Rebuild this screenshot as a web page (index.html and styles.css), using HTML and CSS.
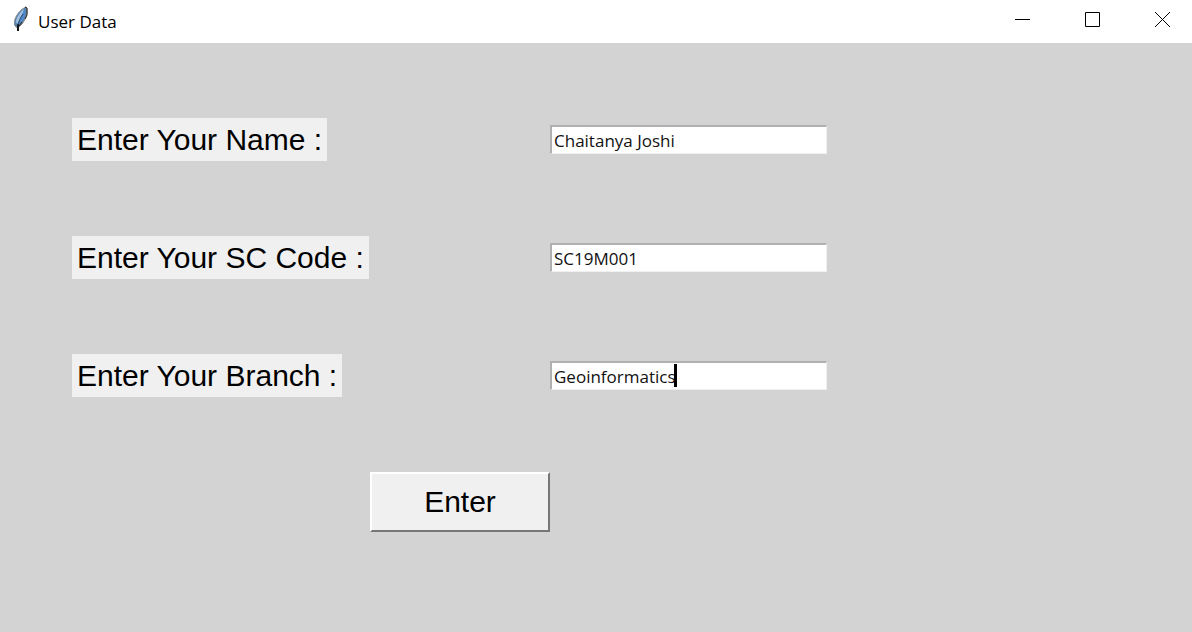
FILE: index.html
```html
<!DOCTYPE html>
<html lang="en">
<head>
<meta charset="utf-8">
<meta name="viewport" content="width=device-width, initial-scale=1">
<title>User Data</title>
<link rel="stylesheet" href="styles.css">
</head>
<body>
<header class="titlebar">
  <svg class="feather" width="18" height="26" viewBox="0 0 18 26" aria-hidden="true">
    <path d="M14 1C9 3 5 8 3 13c-1 4-1 6 1 8l2 1 4-4c3-4 5-8 5-12 0-3 0-4-1-5z" fill="#5484b8" stroke="#8b8780" stroke-width="1"/>
    <path d="M12 3C8 6 5 11 4 15l1 3c3-3 5-9 7-15z" fill="#a5c4e4"/>
    <path d="M13 4c1 5-3 11-7 14 1-4 4-10 7-14z" fill="#4c8bd0"/>
    <path d="M13 1l2 1v7l-2 4M10 16l-3 4" fill="none" stroke="#28211e" stroke-width="1"/>
    <path d="M6 18v7" fill="none" stroke="#171717" stroke-width="2"/>
    <path d="M11 8C8 12 7 15 6 19" fill="none" stroke="#2d4560" stroke-width="1"/>
  </svg>
  <h1 class="title">User Data</h1>
  <div class="controls">
    <button class="control" type="button" aria-label="Minimize"><svg width="15" height="15" viewBox="0 0 15 15"><path d="M0 7.5h15"/></svg></button>
    <button class="control" type="button" aria-label="Maximize"><svg width="15" height="15" viewBox="0 0 15 15"><path d="M.5.5h14v14H.5z"/></svg></button>
    <button class="control" type="button" aria-label="Close"><svg width="15" height="15" viewBox="0 0 15 15"><path d="M0 0l15 15M15 0L0 15"/></svg></button>
  </div>
</header>
<main class="content">
  <form class="form">
    <label class="label" for="name">Enter Your Name :</label>
    <div class="field"><input class="entry" id="name" type="text" value="Chaitanya Joshi"></div>
    <label class="label" for="code">Enter Your SC Code :</label>
    <div class="field"><input class="entry" id="code" type="text" value="SC19M001"></div>
    <label class="label" for="branch">Enter Your Branch :</label>
    <div class="field"><input class="entry" id="branch" type="text" value="Geoinformatics"><span class="caret"></span></div>
    <button class="submit" type="button">Enter</button>
  </form>
</main>
</body>
</html>
```
FILE: styles.css
```css
* { box-sizing: border-box; }
body {
  margin: 0;
  min-height: 100vh;
  display: flex;
  flex-direction: column;
  background: #d3d3d3;
  color: #000;
}
.titlebar {
  display: flex;
  align-items: center;
  height: 43px;
  padding-left: 12px;
  background: #fff;
}
.feather { margin-bottom: 6px; }
.title {
  margin: 0 0 0 8px;
  font: 400 17px/42px "Open Sans", "Noto Sans", sans-serif;
}
.controls {
  display: flex;
  align-self: stretch;
  margin-left: auto;
  padding-bottom: 4px;
}
.control {
  display: grid;
  place-items: center;
  width: 70px;
  padding: 0 0 0 11px;
  border: 0;
  background: transparent;
}
.control path { fill: none; stroke: #000; stroke-width: 1; }
.content { flex: 1; padding: 75px 72px; }
.form {
  display: grid;
  grid-template-columns: 298px 180px 277px;
  grid-template-rows: repeat(3, 43px) auto;
  row-gap: 75px;
  align-items: center;
}
.label {
  grid-column: 1;
  justify-self: start;
  padding: 0 5px;
  background: #f0f0f0;
  font: 30px/43px "Liberation Sans", Arial, sans-serif;
  white-space: nowrap;
}
.field { grid-column: 3; position: relative; display: flex; }
.entry {
  width: 100%;
  height: 29px;
  padding: 0 2px;
  border: 2px solid;
  border-color: #b0b0b0 #f0f0f0 #f0f0f0 #b0b0b0;
  border-width: 2px 1px 1px 2px;
  border-radius: 0;
  outline: 0;
  background: #fff;
  color: #111;
  font: 17px/24px "Open Sans", "Noto Sans", sans-serif;
}
.caret {
  position: absolute;
  left: 124px;
  top: 3px;
  width: 3px;
  height: 23px;
  background: #000;
}
.submit {
  grid-column: 2;
  height: 60px;
  padding: 0;
  border: 2px solid;
  border-color: #fff #777 #777 #fff;
  border-radius: 0;
  background: #f0f0f0;
  color: #000;
  font: 30px/44px "Liberation Sans", Arial, sans-serif;
}
```
